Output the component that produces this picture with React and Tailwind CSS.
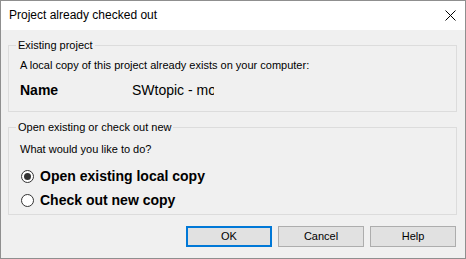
import React from "react";

function Radio({ checked, label }) {
  return (
    <div className="flex items-center h-[16px]">
      <span className="ml-[1px] w-[13px] h-[13px] rounded-full border border-[#333333] bg-white flex items-center justify-center">
        {checked && <span className="w-[7px] h-[7px] rounded-full bg-[#333333]" />}
      </span>
      <span className="ml-[6px] text-[14px] leading-[16px] font-bold text-black">{label}</span>
    </div>
  );
}

function Button({ children, primary }) {
  return (
    <button
      className={
        "w-[86px] h-[21px] bg-[#e1e1e1] text-[11px] leading-[13px] text-black flex items-center justify-center " +
        (primary ? "border-2 border-[#0078d7]" : "border border-[#adadad]")
      }
    >
      {children}
    </button>
  );
}

export default function App() {
  return (
    <div
      className="w-[466px] h-[259px] border border-[#8f8f8f] bg-[#f0f0f0] flex flex-col overflow-hidden"
      style={{ fontFamily: '"Liberation Sans", Arial, sans-serif' }}
    >
      <div className="h-[29px] bg-white flex items-center justify-between pl-[8px] pr-[9px] shrink-0">
        <span className="text-[12px] leading-[15px] text-black">Project already checked out</span>
        <svg width="11" height="11" viewBox="0 0 11 11" className="block">
          <path d="M0.5 0.5 L10.5 10.5 M10.5 0.5 L0.5 10.5" stroke="#000" strokeWidth="1" fill="none" />
        </svg>
      </div>

      <fieldset className="mt-[9px] ml-[7px] mr-[8px] border border-[#dcdcdc]">
        <legend className="ml-[7px] px-[2px] text-[11px] leading-[13px] text-black">Existing project</legend>
        <div className="pl-[11px] pb-[13px]">
          <div className="mt-[7px] text-[11px] leading-[13px] text-black">
            A local copy of this project already exists on your computer:
          </div>
          <div className="mt-[10px] flex items-center h-[16px]">
            <span className="w-[112px] text-[14px] leading-[16px] font-bold text-black">Name</span>
            <span className="w-[82px] overflow-hidden whitespace-nowrap text-[14px] leading-[16px] text-black">
              SWtopic - more
            </span>
          </div>
        </div>
      </fieldset>

      <fieldset className="mt-[9px] ml-[7px] mr-[8px] border border-[#dcdcdc]">
        <legend className="ml-[7px] px-[2px] text-[11px] leading-[13px] text-black">Open existing or check out new</legend>
        <div className="pl-[11px] pb-[6px]">
          <div className="mt-[9px] text-[11px] leading-[13px] text-black">What would you like to do?</div>
          <div className="mt-[12px]">
            <Radio checked label="Open existing local copy" />
          </div>
          <div className="mt-[8px]">
            <Radio label="Check out new copy" />
          </div>
        </div>
      </fieldset>

      <div className="mt-[11px] flex justify-end gap-[6px] pr-[9px]">
        <Button primary>OK</Button>
        <Button>Cancel</Button>
        <Button>Help</Button>
      </div>
    </div>
  );
}
